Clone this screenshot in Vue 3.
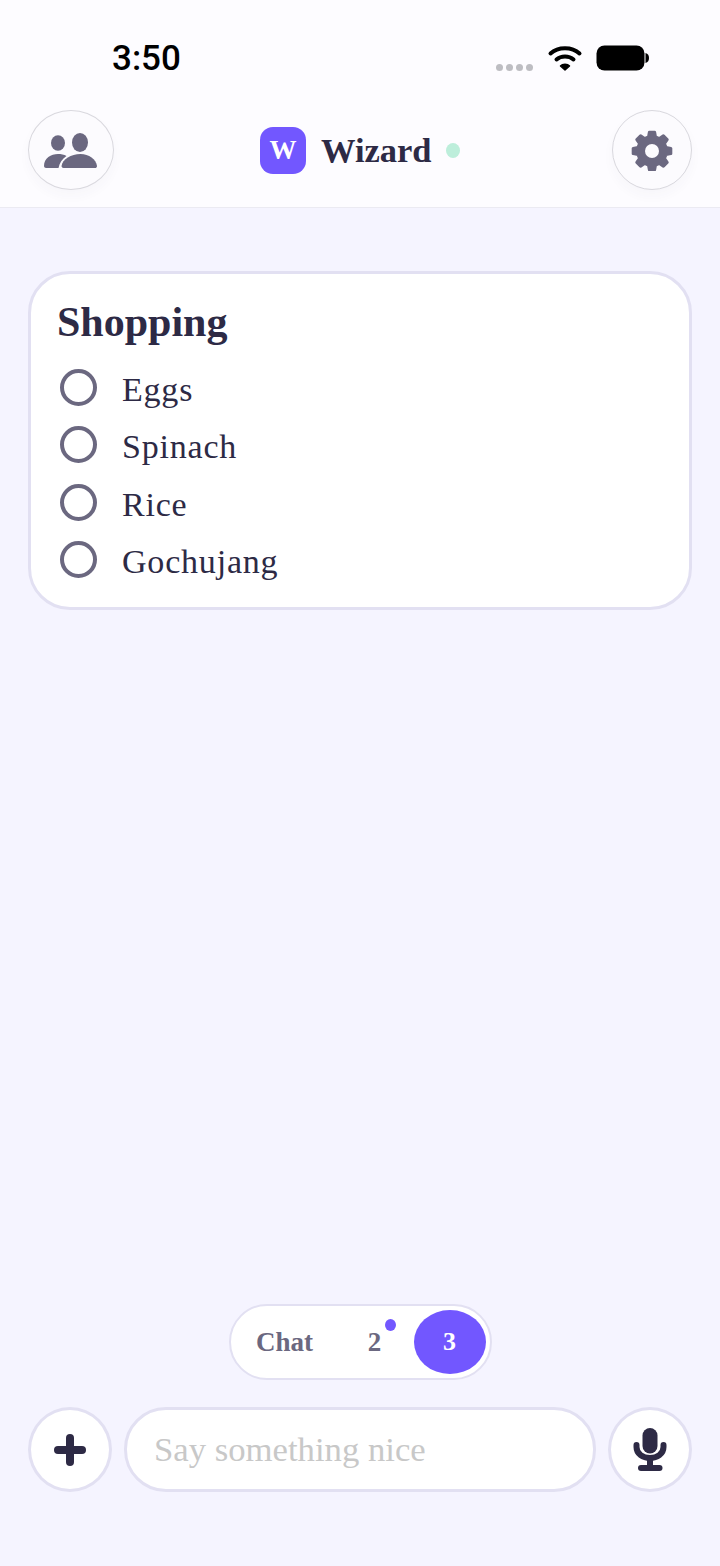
<script setup>
const items = ['Eggs', 'Spinach', 'Rice', 'Gochujang']

function point(radius, degrees) {
  const r = (degrees * Math.PI) / 180
  return `${(22 + radius * Math.sin(r)).toFixed(2)} ${(21 - radius * Math.cos(r)).toFixed(2)}`
}
const gearPath = Array.from({ length: 8 }, (_, i) => {
  const a = i * 45
  const pts = [point(14.5, a - 14), point(19, a - 8), point(19, a + 8), point(14.5, a + 14)]
  return (i === 0 ? 'M' : 'L') + pts.join('L')
}).join('') + 'Z'
</script>

<template>
  <div class="screen">
    <header class="top">
      <div class="status">
        <span class="time">3:50</span>
        <div class="status-right">
          <div class="signal"><i></i><i></i><i></i><i></i></div>
          <svg class="wifi" width="36" height="28" viewBox="0 0 36 28" fill="none" stroke="#000" stroke-linecap="round">
            <path d="M3.500 9.500C11 2.500 25 2.500 32.500 9.500" stroke-width="4" />
            <path d="M9.500 15.500C14 11.500 22 11.500 26.500 15.500" stroke-width="4" />
            <path d="M13.500 22C15.500 19.500 20.500 19.500 22.500 22L18 26Z" fill="#000" stroke="#000" stroke-width="1.500" stroke-linejoin="round" />
          </svg>
          <svg class="battery" width="54" height="26" viewBox="0 0 54 26">
            <rect x="0.500" y="0.500" width="48" height="25" rx="8" fill="#000" />
            <path d="M49.500 8C52 8.500 53 10.500 53 13C53 15.500 52 17.500 49.500 18Z" fill="#000" />
          </svg>
        </div>
      </div>
      <div class="nav">
        <button class="round-btn wide">
          <svg width="56" height="38" viewBox="0 0 56 38" fill="#6b6880">
            <ellipse cx="15" cy="12" rx="7" ry="7.800" />
            <ellipse cx="37" cy="11.500" rx="8" ry="9.500" />
            <path d="M1 35C1 27 8 23 15 23C18 23 21 23.500 23.500 25C19 28 16.500 32 15.500 37H3C2 37 1 36 1 35Z" />
            <path d="M18.500 35C19.500 28 28 23 37.500 23C46 23 53 28 54 35C54 36.500 53 37 52 37H20.500C19.500 37 18.500 36 18.500 35Z" />
          </svg>
        </button>
        <div class="brand">
          <span class="logo">W</span>
          <span class="brand-name">Wizard</span>
          <span class="online"></span>
        </div>
        <button class="round-btn">
          <svg width="44" height="42" viewBox="0 -1 44 42">
            <path :d="gearPath" fill="#6b6880" stroke="#6b6880" stroke-width="3" stroke-linejoin="round" />
            <circle cx="22" cy="21" r="7" fill="#fcfbfe" />
          </svg>
        </button>
      </div>
    </header>

    <main class="content">
      <section class="card">
        <h2 class="card-title">Shopping</h2>
        <ul class="list">
          <li v-for="item in items" :key="item" class="row">
            <span class="check"></span>
            <span class="label">{{ item }}</span>
          </li>
        </ul>
      </section>
    </main>

    <footer class="bottom">
      <div class="tabs">
        <span class="tab chat">Chat</span>
        <span class="tab two">2<i class="dot"></i></span>
        <span class="tab active">3</span>
      </div>
      <div class="composer">
        <button class="compose-btn">
          <svg width="32" height="32" viewBox="0 0 32 32" fill="#2d2a45">
            <rect x="12" y="0" width="8" height="32" rx="4" />
            <rect x="0" y="12" width="32" height="8" rx="4" />
          </svg>
        </button>
        <div class="field">Say something nice</div>
        <button class="compose-btn">
          <svg width="36" height="44" viewBox="0 0 36 44" fill="none">
            <rect x="10.500" y="0" width="15" height="25.500" rx="7.500" fill="#2d2a45" />
            <path d="M4.500 17V19C4.500 26 11 30 18 30C25 30 31.500 26 31.500 19V17" stroke="#2d2a45" stroke-width="6" stroke-linecap="round" />
            <rect x="15" y="30" width="6" height="9" fill="#2d2a45" />
            <rect x="6" y="37" width="24.500" height="6" rx="3" fill="#2d2a45" />
          </svg>
        </button>
      </div>
    </footer>
  </div>
</template>

<style scoped>
.screen {
  width: 720px;
  height: 1566px;
  display: flex;
  flex-direction: column;
  background: #f5f4ff;
  font-family: "Liberation Serif", serif;
  color: #2d2a45;
  overflow: hidden;
}
.top {
  height: 208px;
  box-sizing: border-box;
  background: #fdfcff;
  border-bottom: 1px solid #ebeaf2;
  display: flex;
  flex-direction: column;
}
.status {
  height: 110px;
  box-sizing: border-box;
  padding: 40px 70px 0 112px;
  display: flex;
  justify-content: space-between;
  align-items: flex-start;
}
.time {
  margin-top: 1px;
  font-family: Roboto, "Liberation Sans", sans-serif;
  font-weight: 500;
  font-size: 35px;
  line-height: 36px;
  color: #000;
}
.status-right {
  display: flex;
  align-items: flex-start;
  margin-top: 4px;
}
.signal {
  display: flex;
  gap: 3px;
  margin-top: 20px;
  margin-right: 14px;
}
.signal i {
  width: 7px;
  height: 7px;
  border-radius: 50%;
  background: #bdbdc2;
}
.wifi {
  margin-right: 13px;
}
.battery {
  margin-top: 1px;
}
.nav {
  display: flex;
  justify-content: space-between;
  align-items: center;
  padding: 0 28px;
  height: 80px;
}
.round-btn {
  width: 80px;
  height: 80px;
  padding: 0;
  box-sizing: border-box;
  border: 1px solid #d9d8de;
  border-radius: 50%;
  background: #fcfbfe;
  box-shadow: 0 6px 12px rgba(60, 55, 110, 0.03);
  display: flex;
  align-items: center;
  justify-content: center;
}
.round-btn.wide {
  width: 86px;
}
.brand {
  display: flex;
  align-items: center;
  margin-right: 6px;
}
.logo {
  width: 46px;
  height: 47px;
  border-radius: 13px;
  background: #7257ff;
  color: #fff;
  font-weight: 700;
  font-size: 27px;
  display: flex;
  align-items: center;
  justify-content: center;
}
.brand-name {
  margin-left: 15px;
  width: 110px;
  font-weight: 700;
  font-size: 34.500px;
  line-height: 42px;
  color: #2d2a45;
  white-space: nowrap;
}
.online {
  width: 14px;
  height: 15px;
  margin-left: 15px;
  border-radius: 50%;
  background: #bdeedb;
}
.content {
  flex: 1;
  padding: 63px 28px 0;
}
.card {
  height: 339px;
  box-sizing: border-box;
  padding: 26px 30px 0 26px;
  background: #fff;
  border: 3px solid #e2e0f2;
  border-radius: 42px;
}
.card-title {
  margin: 0;
  font-weight: 700;
  font-size: 42px;
  line-height: 44px;
  color: #2d2a45;
}
.list {
  list-style: none;
  margin: 25px 0 0;
  padding: 0;
  display: flex;
  flex-direction: column;
  gap: 20.300px;
}
.row {
  display: flex;
  align-items: center;
  height: 37px;
  padding-left: 3px;
}
.check {
  width: 37px;
  height: 37px;
  box-sizing: border-box;
  border: 4.500px solid #6b6880;
  border-radius: 50%;
}
.label {
  margin-left: 25px;
  margin-top: 4px;
  font-size: 34px;
  letter-spacing: 0.8px;
  line-height: 37px;
  color: #2d2a45;
}
.bottom {
  height: 262px;
  box-sizing: border-box;
  padding: 0 28px;
  display: flex;
  flex-direction: column;
  align-items: center;
}
.tabs {
  width: 263px;
  height: 76px;
  box-sizing: border-box;
  border: 2px solid #e2e0f2;
  border-radius: 38px;
  background: #fff;
  display: flex;
  align-items: center;
  font-weight: 700;
  font-size: 27px;
  color: #6b6880;
}
.tab {
  display: flex;
  align-items: center;
  justify-content: center;
}
.chat {
  margin-left: 24px;
  width: 60px;
}
.two {
  position: relative;
  margin-left: 51px;
  width: 18px;
}
.dot {
  position: absolute;
  top: -8px;
  left: 19px;
  width: 11px;
  height: 12px;
  border-radius: 50%;
  background: #7257ff;
}
.active {
  margin-left: 30px;
  width: 72px;
  height: 64px;
  border-radius: 50%;
  background: #7257ff;
  color: #fff;
  font-size: 26px;
}
.composer {
  margin-top: 27px;
  width: 100%;
  display: flex;
  gap: 12px;
  align-items: stretch;
}
.compose-btn {
  width: 84px;
  height: 85px;
  padding: 0;
  box-sizing: border-box;
  border: 3px solid #e2e0f2;
  border-radius: 50%;
  background: #fff;
  display: flex;
  align-items: center;
  justify-content: center;
}
.field {
  flex: 1;
  height: 85px;
  box-sizing: border-box;
  padding-left: 27px;
  border: 3px solid #e2e0f2;
  border-radius: 42px;
  background: #fff;
  display: flex;
  align-items: center;
  font-size: 34.700px;
  color: #c8c8c8;
}
</style>
